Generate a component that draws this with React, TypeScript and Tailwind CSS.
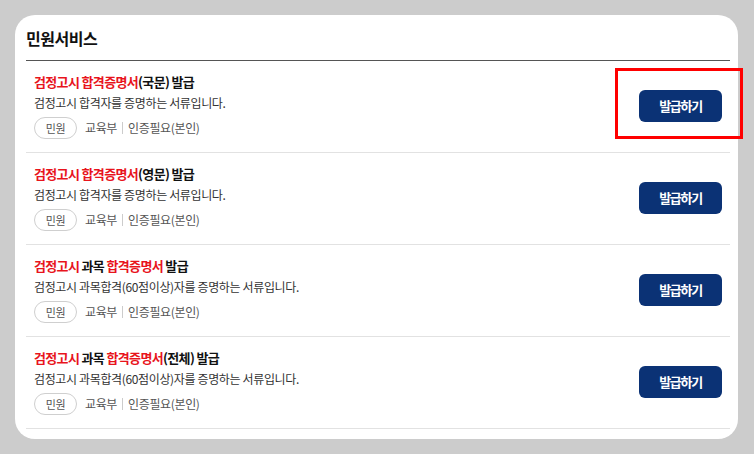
const items = [
  {
    title: (
      <>
        <span className="text-[#e8141c]">검정고시 합격증명서</span>(국문) 발급
      </>
    ),
    desc: '검정고시 합격자를 증명하는 서류입니다.',
  },
  {
    title: (
      <>
        <span className="text-[#e8141c]">검정고시 합격증명서</span>(영문) 발급
      </>
    ),
    desc: '검정고시 합격자를 증명하는 서류입니다.',
  },
  {
    title: (
      <>
        <span className="text-[#e8141c]">검정고시</span> 과목 <span className="text-[#e8141c]">합격증명서</span> 발급
      </>
    ),
    desc: '검정고시 과목합격(60점이상)자를 증명하는 서류입니다.',
  },
  {
    title: (
      <>
        <span className="text-[#e8141c]">검정고시</span> 과목 <span className="text-[#e8141c]">합격증명서</span>(전체) 발급
      </>
    ),
    desc: '검정고시 과목합격(60점이상)자를 증명하는 서류입니다.',
  },
];

export default function App() {
  return (
    <div
      className="h-[454px] w-[754px] bg-[#cccccc] pl-[15px] pt-[15px]"
      style={{ fontFamily: '"Noto Sans CJK KR", "Noto Sans", sans-serif' }}
    >
      <div className="relative h-[424px] w-[723px] rounded-[20px] bg-white pl-[11px] pr-[8px]">
        <div className="border-b border-[#555] pb-[10px] pt-[11px]">
          <h2 className="text-[16px] font-bold leading-[24px] tracking-[-0.03em] text-[#111]">민원서비스</h2>
        </div>
        <ul>
          {items.map((it, i) => (
            <li key={i} className="flex items-center justify-between border-b border-[#e2e2e2] pb-[13px] pl-[8px] pr-[8px] pt-[11px]">
              <div>
                <p className="text-[13px] font-bold leading-[20px] tracking-[-0.05em] text-[#111]">{it.title}</p>
                <p className="mt-[2px] text-[12px] leading-[18px] tracking-[-0.03em] text-[#333]">{it.desc}</p>
                <div className="mt-[5px] flex items-center text-[12px] tracking-[-0.03em] text-[#555]">
                  <span className="flex h-[22px] w-[43px] items-center justify-center rounded-full border border-[#cfcfcf] text-[11px] text-[#555]">
                    민원
                  </span>
                  <span className="ml-[8px]">교육부</span>
                  <span className="mx-[5px] h-[12px] w-px bg-[#ccc]" />
                  <span>인증필요(본인)</span>
                </div>
              </div>
              <button className="flex h-[32px] w-[83px] items-center justify-center rounded-[6px] bg-[#0b3275] text-[13px] font-bold tracking-[-0.1em] text-white">
                발급하기
              </button>
            </li>
          ))}
        </ul>
        <div className="absolute left-[600px] top-[53px] h-[71px] w-[128px] border-[3px] border-[#ff0000]" />
      </div>
    </div>
  );
}
